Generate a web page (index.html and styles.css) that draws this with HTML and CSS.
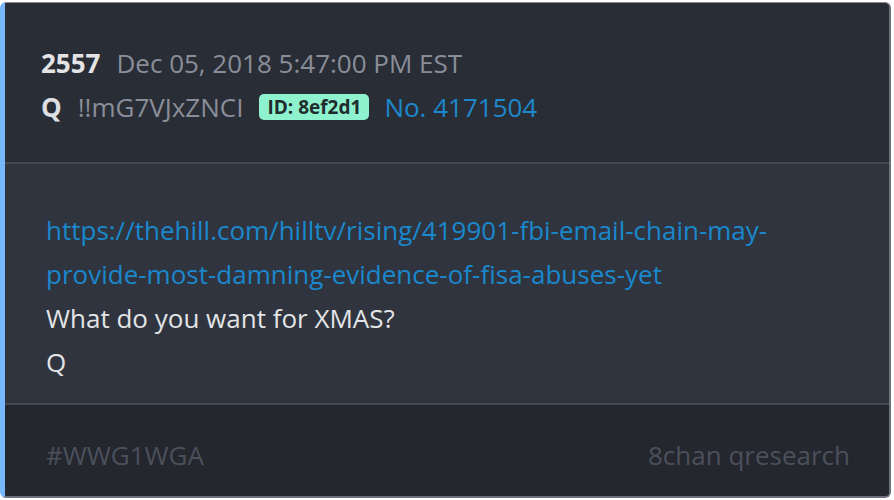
FILE: index.html
```html
<!DOCTYPE html>
<html>
<head>
<meta charset="utf-8">
<link rel="stylesheet" href="styles.css">
</head>
<body>
<div class="card">
  <div class="head">
    <div class="row"><span class="num">2557</span><span class="date">Dec 05, 2018 5:47:00 PM EST</span></div>
    <div class="row"><span class="name">Q</span><span class="trip">!!mG7VJxZNCI</span><span class="badge">ID: 8ef2d1</span><span class="no">No. 4171504</span></div>
  </div>
  <div class="body">
    <a class="link" href="#">https://thehill.com/hilltv/rising/419901-fbi-email-chain-may-<br>provide-most-damning-evidence-of-fisa-abuses-yet</a>
    <div>What do you want for XMAS?</div>
    <div>Q</div>
  </div>
  <div class="foot">
    <span>#WWG1WGA</span><span>8chan qresearch</span>
  </div>
</div>
</body>
</html>
```
FILE: styles.css
```css
html, body { margin: 0; padding: 0; background: #ffffff; }
body { font-family: "Open Sans", "Noto Sans", sans-serif; font-size: 26px; }
.card {
  margin-top: 2px;
  width: 891px;
  height: 496px;
  box-sizing: border-box;
  border-top: 1px solid #868b96;
  border-right: 2px solid #6c717c;
  border-bottom: 2px solid #6c717c;
  border-left: 5px solid #78b7fb;
  border-radius: 6px;
  overflow: hidden;
  display: flex;
  flex-direction: column;
  background: #24272e;
}
.head {
  background: #292d36;
  padding: 38px 36px 33px 36px;
  border-bottom: 2px solid #434852;
  line-height: 44px;
}
.row { display: flex; align-items: center; }
.num { font-weight: 700; color: #e4e4e6; margin-right: 16px; }
.date { color: #8a8e99; }
.name { font-weight: 700; color: #dedfe2; margin-right: 16px; }
.trip { color: #8a8e99; margin-right: 16px; }
.badge {
  background: #8ef2cf;
  color: #1f2b2c;
  font-weight: 700;
  font-size: 19px;
  line-height: 26px;
  padding: 0 8px;
  border-radius: 5px;
  margin-right: 15px;
}
.no { color: #1d88cc; }
.body {
  background: #2f343e;
  padding: 44px 40px 19px 41px;
  line-height: 44px;
  color: #e3e4e6;
  border-bottom: 2px solid #434852;
}
.link { color: #1a88cd; text-decoration: none; }
.foot {
  flex: 1;
  background: #24272e;
  padding: 28px 39px 0 41px;
  line-height: 44px;
  color: #4b505b;
  display: flex;
  justify-content: space-between;
}
```
